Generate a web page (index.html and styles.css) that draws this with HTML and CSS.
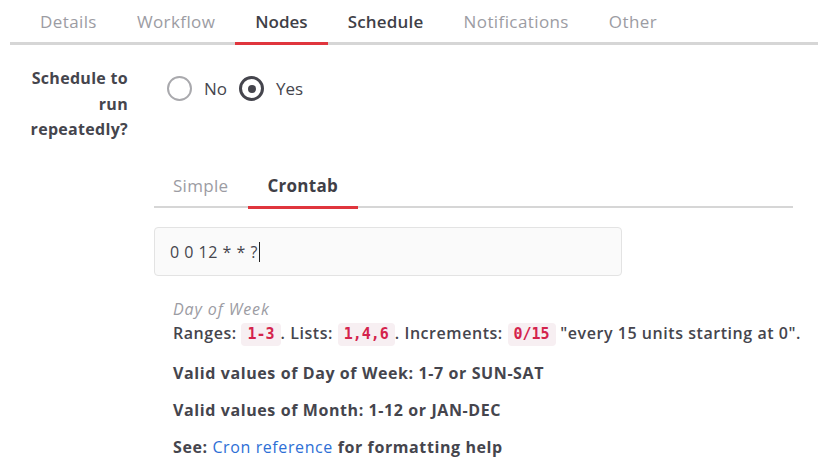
FILE: index.html
```html
<!DOCTYPE html>
<html>
<head>
<meta charset="utf-8">
<link rel="stylesheet" href="styles.css">
</head>
<body>
<nav class="tabs">
  <span class="tab">Details</span>
  <span class="tab">Workflow</span>
  <span class="tab tab-active">Nodes</span>
  <span class="tab tab-dark">Schedule</span>
  <span class="tab">Notifications</span>
  <span class="tab">Other</span>
</nav>
<div class="form-row">
  <div class="label">Schedule to run repeatedly?</div>
  <div class="content">
    <div class="radios">
      <span class="radio"><span class="circle"></span>No</span>
      <span class="radio"><span class="circle circle-on"><span class="dot"></span></span>Yes</span>
    </div>
    <nav class="subtabs">
      <span class="subtab">Simple</span>
      <span class="subtab subtab-active">Crontab</span>
    </nav>
    <div class="input">0 0 12 * * ?<span class="caret"></span></div>
    <div class="help">
      <div class="help-title">Day of Week</div>
      <p class="help-line help-first">Ranges: <code>1-3</code>. Lists: <code>1,4,6</code>. Increments: <code>0/15</code> "every 15 units starting at 0".</p>
      <p class="help-line">Valid values of Day of Week: 1-7 or SUN-SAT</p>
      <p class="help-line">Valid values of Month: 1-12 or JAN-DEC</p>
      <p class="help-line">See: <a class="link" href="#">Cron reference</a> for formatting help</p>
    </div>
  </div>
</div>
</body>
</html>
```
FILE: styles.css
```css
html, body {
  margin: 0;
  padding: 0;
  background: #ffffff;
}
body {
  font-family: "Open Sans", Lato, sans-serif;
  color: #45454d;
  width: 818px;
  height: 474px;
  overflow: hidden;
}
.tabs {
  display: flex;
  margin-left: 10px;
  padding-left: 10px;
  border-bottom: 3px solid #d6d6d6;
  height: 42px;
}
.tab {
  padding: 0 20px;
  font-size: 17px;
  letter-spacing: 0.4px;
  line-height: 44px;
  color: #9c9ca3;
}
.tab-dark {
  color: #3f3f47;
  font-weight: 600;
  letter-spacing: 0.2px;
}
.tab-active {
  color: #3f3f47;
  font-weight: 600;
  letter-spacing: 0;
  border-bottom: 3px solid #e0353d;
  margin-bottom: -3px;
  height: 42px;
}
.form-row {
  display: flex;
  padding-top: 21px;
}
.label {
  width: 112px;
  margin-left: 16px;
  text-align: right;
  font-weight: 700;
  font-size: 16px;
  letter-spacing: 0.3px;
  line-height: 25.5px;
  color: #45454d;
}
.content {
  margin-left: 26px;
  width: 639px;
}
.radios {
  display: flex;
  align-items: center;
  gap: 12px;
  padding-left: 13px;
  padding-top: 10px;
  height: 25px;
  font-size: 17px;
  color: #45454d;
}
.radio {
  display: flex;
  align-items: center;
  gap: 12px;
}
.circle {
  width: 21px;
  height: 21px;
  border: 2px solid #a9a9ad;
  border-radius: 50%;
  display: flex;
  align-items: center;
  justify-content: center;
}
.circle-on {
  border: 3px solid #45454d;
  width: 19px;
  height: 19px;
}
.dot {
  width: 8px;
  height: 8px;
  border-radius: 50%;
  background: #45454d;
}
.subtabs {
  display: flex;
  margin-top: 64px;
  border-bottom: 2px solid #d6d6d6;
  height: 41px;
}
.subtab {
  padding: 0 20px 0 19px;
  font-size: 17px;
  letter-spacing: 0.3px;
  line-height: 41px;
  color: #9c9ca3;
}
.subtab-active {
  color: #3f3f47;
  font-weight: 700;
  border-bottom: 3px solid #e0353d;
  margin-bottom: -2px;
  height: 41px;
}
.input {
  margin-top: 19px;
  width: 451px;
  height: 47px;
  border: 1px solid #e3e3e3;
  border-radius: 4px;
  background: #fafafa;
  padding: 0 0 0 15px;
  font-size: 16px;
  letter-spacing: 0.5px;
  color: #45454d;
  display: flex;
  align-items: center;
}
.caret {
  display: inline-block;
  width: 1px;
  height: 20px;
  background: #222;
  margin-left: 1px;
}
.help {
  padding-left: 19px;
  padding-top: 21px;
}
.help-title {
  font-style: italic;
  font-size: 16px;
  letter-spacing: 0.9px;
  line-height: 24px;
  color: #9c9ca3;
}
.help-line {
  margin: 0 0 13px 0;
  font-size: 16px;
  font-weight: 700;
  letter-spacing: 0.6px;
  line-height: 24px;
  white-space: nowrap;
  color: #45454d;
}
.help-first {
  margin-bottom: 15px;
  font-weight: 600;
  letter-spacing: 0.55px;
}
.help-line code {
  display: inline-block;
  font-family: "DejaVu Sans Mono", monospace;
  font-weight: 700;
  font-size: 15px;
  line-height: 23px;
  letter-spacing: 0;
  color: #d4234c;
  background: #f7eff2;
  border-radius: 4px;
  padding: 0 6px;
  vertical-align: middle;
}
.link {
  color: #2e6fd6;
  font-weight: 400;
  text-decoration: none;
}
```
